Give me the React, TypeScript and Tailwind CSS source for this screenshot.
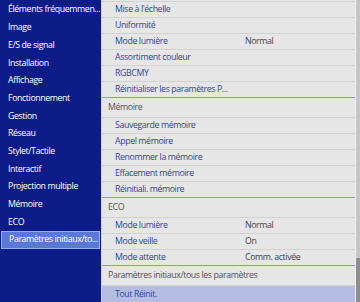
import React from "react";

const leftItems = [
  "Éléments fréquemmen...",
  "Image",
  "E/S de signal",
  "Installation",
  "Affichage",
  "Fonctionnement",
  "Gestion",
  "Réseau",
  "Stylet/Tactile",
  "Interactif",
  "Projection multiple",
  "Mémoire",
  "ECO",
  "Paramètres initiaux/to...",
];

type Row =
  | { kind: "item"; label: string; value?: string; last?: boolean; active?: boolean }
  | { kind: "header"; label: string };

const rows: Row[] = [
  { kind: "item", label: "Mise à l'échelle" },
  { kind: "item", label: "Uniformité" },
  { kind: "item", label: "Mode lumière", value: "Normal" },
  { kind: "item", label: "Assortiment couleur" },
  { kind: "item", label: "RGBCMY" },
  { kind: "item", label: "Réinitialiser les paramètres P...", last: true },
  { kind: "header", label: "Mémoire" },
  { kind: "item", label: "Sauvegarde mémoire" },
  { kind: "item", label: "Appel mémoire" },
  { kind: "item", label: "Renommer la mémoire" },
  { kind: "item", label: "Effacement mémoire" },
  { kind: "item", label: "Réinitiali. mémoire", last: true },
  { kind: "header", label: "ECO" },
  { kind: "item", label: "Mode lumière", value: "Normal" },
  { kind: "item", label: "Mode veille", value: "On" },
  { kind: "item", label: "Mode attente", value: "Comm. activée", last: true },
  { kind: "header", label: "Paramètres initiaux/tous les paramètres" },
  { kind: "item", label: "Tout Réinit.", active: true },
];

export default function App() {
  return (
    <div
      className="flex w-[360px] h-[302px] overflow-hidden leading-none text-[8.8px] tracking-[-0.4px]"
      style={{ fontFamily: '"Open Sans", "Noto Sans", sans-serif' }}
    >
      <div className="w-[101px] shrink-0 bg-[#0e1c8a] pt-[1px]">
        {leftItems.map((t, i) =>
          i === 13 ? (
            <div
              key={i}
              className="ml-[1px] w-[99px] h-[17.7px] flex items-center pl-[7px] bg-[#5a79d6] border border-[#97ace9] text-white whitespace-nowrap"
            >
              {t}
            </div>
          ) : (
            <div key={i} className="h-[17.7px] flex items-center pl-[8px] text-white whitespace-nowrap">
              {t}
            </div>
          )
        )}
      </div>
      <div className="flex-1 bg-[#e6e6e6] border-l border-[#d6d6d6]">
        <div className="mt-[1px] border-t border-[#d2d2d2]">
          {rows.map((r, i) =>
            r.kind === "header" ? (
              <div
                key={i}
                className="h-[20px] flex items-center pl-[6px] text-[#555555] border-b border-[#d2d2d2] whitespace-nowrap"
              >
                {r.label}
              </div>
            ) : (
              <div
                key={i}
                className={
                  "h-[16px] flex items-center whitespace-nowrap border-b " +
                  (r.last ? "border-[#8c95d2] " : "border-[#d2d2d2] ") +
                  (r.active ? "bg-[#b5bde2] h-[17px]" : "")
                }
              >
                <div className="w-[143px] shrink-0 pl-[13px] text-[#3444a6]">{r.label}</div>
                {r.value && <div className="text-[#454545]">{r.value}</div>}
              </div>
            )
          )}
        </div>
      </div>
      <div className="w-[5px] shrink-0 flex flex-col border-l border-[#f0f0f0]">
        <div className="flex-1 bg-[#c6c6c6]" />
        <div className="h-[44px] bg-[#8e8e8e]" />
      </div>
    </div>
  );
}
